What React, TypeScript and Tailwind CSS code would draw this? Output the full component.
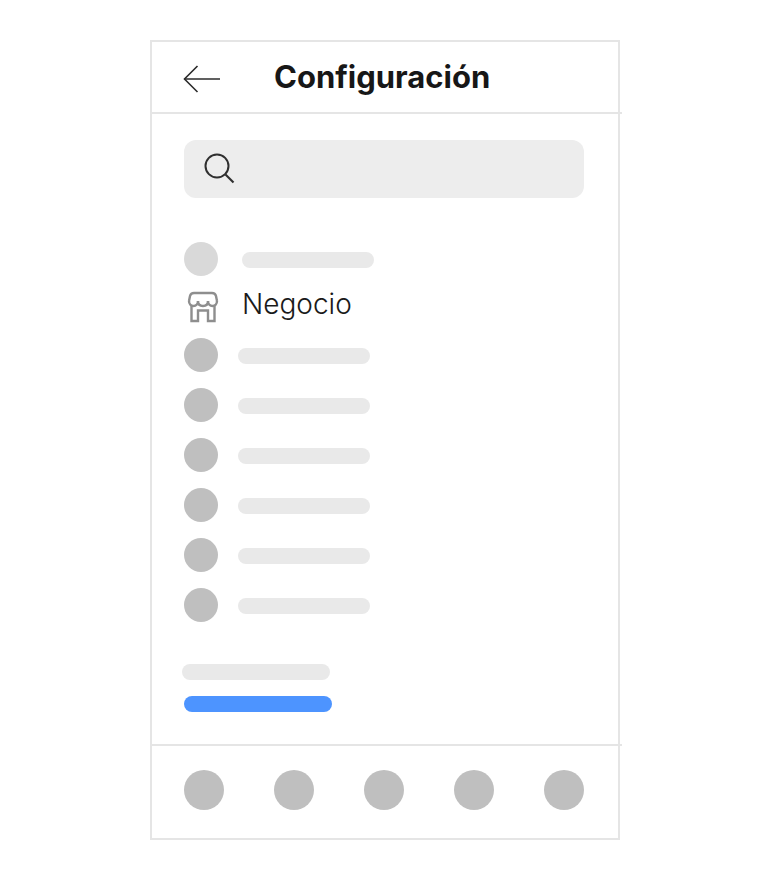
const rows = [1, 2, 3, 4, 5, 6];
const navItems = [1, 2, 3, 4, 5];

function BackIcon() {
  return (
    <svg className="mt-[3px]" width="38" height="28" viewBox="0 0 38 28" fill="none" stroke="#2b2b2b" strokeWidth="1.6">
      <path d="M37 14H1.500" />
      <path d="M14.500 1L1.500 14L14.500 27" />
    </svg>
  );
}

function SearchIcon() {
  return (
    <svg width="32" height="32" viewBox="0 0 32 32" fill="none" stroke="#2f2f2f" strokeWidth="2">
      <circle cx="13" cy="13" r="11.500" />
      <path d="M21.500 21.500L29.500 29.500" strokeWidth="2.200" />
    </svg>
  );
}

function StoreIcon() {
  return (
    <svg width="32" height="32" viewBox="0 0 32 32" fill="none" stroke="#8e8e8e" strokeWidth="2.400">
      <path d="M2 10L3 5C3.500 3 5 2 7 2H25c2 0 3.500 1 4 3L30 10" />
      <path d="M2 10c0 3 2 5 4.500 5s4.500-2 4.500-5" />
      <path d="M11 10c0 3 2 5 5 5s5-2 5-5" />
      <path d="M21 10c0 3 2 5 4.500 5s4.500-2 4.500-5" />
      <path d="M4.500 15v15H11V19.500H21V30h6.500V15" />
    </svg>
  );
}

export default function App() {
  return (
    <div className="min-h-[880px] bg-white pt-10 pl-[150px] font-['Inter',sans-serif]">
      <div className="flex h-[800px] w-[470px] flex-col border-2 border-[#e5e5e5]">
        <div className="flex h-[70px] items-center pl-[31px]">
          <BackIcon />
          <h1 className="ml-[53px] text-[31px] font-bold text-[#171717]">Configuración</h1>
        </div>
        <div className="h-0.5 w-[470px] shrink-0 bg-[#e5e5e5]" />

        <div className="flex flex-1 flex-col pr-[34px] pl-[32px] pt-[26px]">
          <div className="flex h-[58px] items-center rounded-[12px] bg-[#ededed] pl-5">
            <SearchIcon />
          </div>

          <div className="mt-[44px] flex items-start gap-6">
            <div className="h-[34px] w-[34px] rounded-full bg-[#d9d9d9]" />
            <div className="mt-[10px] h-4 w-[132px] rounded-full bg-[#e9e9e9]" />
          </div>

          <div className="mt-[15px] flex h-[32px] items-center gap-[23px] pl-[3px]">
            <StoreIcon />
            <span className="mb-[6px] text-[28px] font-light text-[#1a1a1a]">Negocio</span>
          </div>

          <div className="mt-[15px] flex flex-col gap-4">
            {rows.map((row) => (
              <div key={row} className="flex items-start gap-5">
                <div className="h-[34px] w-[34px] rounded-full bg-[#bfbfbf]" />
                <div className="mt-[10px] h-4 w-[132px] rounded-full bg-[#e9e9e9]" />
              </div>
            ))}
          </div>

          <div className="mt-[42px] -ml-0.5 h-4 w-[148px] rounded-full bg-[#e9e9e9]" />
          <div className="mt-4 h-4 w-[148px] rounded-full bg-[#4d94ff]" />
        </div>

        <div className="h-0.5 w-[470px] shrink-0 bg-[#e5e5e5]" />
        <div className="flex h-[92px] items-start justify-between pt-6 pr-[34px] pl-[32px]">
          {navItems.map((item) => (
            <div key={item} className="h-10 w-10 rounded-full bg-[#bfbfbf]" />
          ))}
        </div>
      </div>
    </div>
  );
}
